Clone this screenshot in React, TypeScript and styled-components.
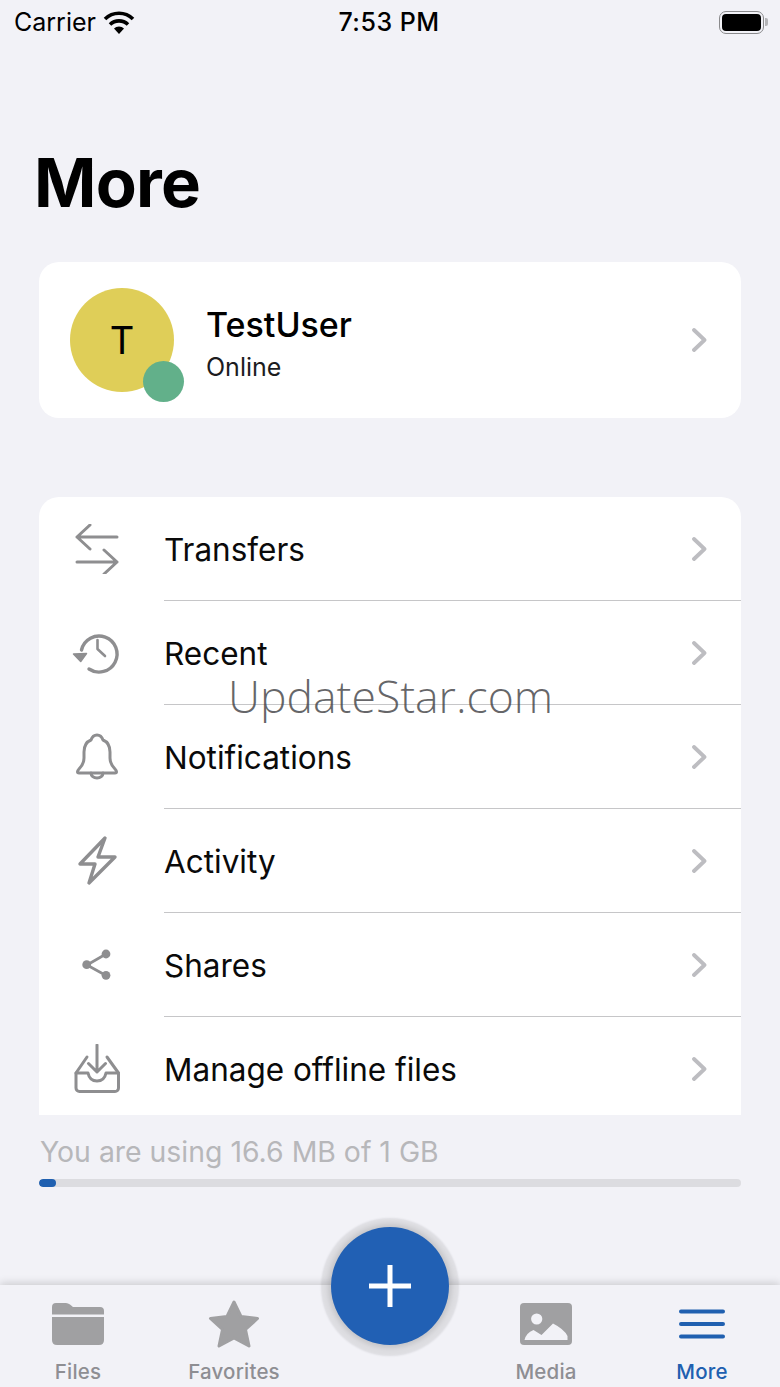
import React from "react";
import styled, { createGlobalStyle } from "styled-components";

const GlobalStyle = createGlobalStyle`
  html, body {
    margin: 0;
    padding: 0;
    background: #f2f2f7;
  }
  * {
    box-sizing: border-box;
  }
`;

const Page = styled.div`
  position: relative;
  width: 780px;
  height: 1387px;
  overflow: hidden;
  display: flex;
  flex-direction: column;
  background: #f2f2f7;
  color: #000;
  font-family: Inter, "Liberation Sans", sans-serif;
`;

const StatusBar = styled.div`
  display: grid;
  grid-template-columns: 1fr auto 1fr;
  align-items: center;
  height: 44px;
  padding: 0 16px 0 14px;
  font-size: 25px;
`;

const Carrier = styled.div`
  display: flex;
  align-items: center;
  gap: 7px;
`;

const Time = styled.div`
  font-weight: 500;
  letter-spacing: 0.5px;
`;

const Battery = styled.div`
  justify-self: end;
  position: relative;
  width: 45px;
  height: 23px;
  padding: 2px;
  border: 1.5px solid #8a8a8c;
  border-radius: 7px;

  &::before {
    content: "";
    display: block;
    height: 100%;
    background: #000;
    border-radius: 4px;
  }

  &::after {
    content: "";
    position: absolute;
    right: -5px;
    top: 6px;
    width: 3px;
    height: 8px;
    background: #b5b5b8;
    border-radius: 0 2px 2px 0;
  }
`;

const Title = styled.h1`
  margin: 92px 0 0 34px;
  font-size: 67px;
  line-height: 94px;
  font-weight: 700;
  letter-spacing: -0.7px;
`;

const ProfileCard = styled.div`
  display: flex;
  align-items: center;
  height: 156px;
  margin: 32px 39px 0;
  padding: 0 34px 0 31px;
  background: #fff;
  border-radius: 20px;
`;

const Avatar = styled.div`
  position: relative;
  flex: none;
  display: flex;
  align-items: center;
  justify-content: center;
  width: 104px;
  height: 104px;
  border-radius: 50%;
  background: #dfce58;
  font-size: 38px;
`;

const StatusDot = styled.span`
  position: absolute;
  right: -10px;
  bottom: -10px;
  width: 41px;
  height: 41px;
  border-radius: 50%;
  background: #62b08a;
`;

const ProfileText = styled.div`
  flex: 1;
  margin-left: 32px;
  padding-top: 6px;
`;

const ProfileName = styled.div`
  font-size: 34px;
  line-height: 42px;
  font-weight: 500;
`;

const ProfileState = styled.div`
  margin-top: 6px;
  font-size: 25px;
  line-height: 30px;
  color: #1c1c1e;
`;

const Menu = styled.div`
  height: 618px;
  margin: 79px 39px 0;
  overflow: hidden;
  background: #fff;
  border-radius: 20px 20px 0 0;
`;

const Row = styled.div`
  display: flex;
  height: 104px;
`;

const RowIcon = styled.div`
  flex: none;
  display: flex;
  align-items: center;
  justify-content: center;
  width: 50px;
  margin: 0 42px 0 33px;
`;

const RowBody = styled.div<{ $last?: boolean }>`
  flex: 1;
  display: flex;
  align-items: center;
  padding: 0 34px 0 0;
  font-size: 31.5px;
  color: #0a0a0a;
  border-bottom: ${(p) => (p.$last ? "none" : "1px solid #c6c6c8")};
`;

const RowLabel = styled.span`
  flex: 1;
  padding-top: 1px;
`;

const GreyIcon = styled.svg`
  display: block;
  fill: none;
  stroke: #8e8e90;
  stroke-width: 3;
  stroke-linecap: round;
  stroke-linejoin: round;
`;

const Usage = styled.div`
  margin: 19px 39px 0;
`;

const UsageText = styled.div`
  padding-left: 1px;
  font-size: 28.4px;
  line-height: 36px;
  color: #b7b7ba;
`;

const UsageTrack = styled.div`
  height: 8px;
  margin-top: 9px;
  background: #dcdce0;
  border-radius: 4px;
  overflow: hidden;
`;

const UsageFill = styled.div`
  height: 100%;
  background: #2060b0;
  border-radius: 4px;
`;

const TabBar = styled.nav`
  position: absolute;
  left: 0;
  right: 0;
  bottom: 0;
  display: grid;
  grid-template-columns: repeat(5, 156px);
  height: 102px;
  background: #f2f2f7;
  box-shadow: 0 -2px 8px rgba(0, 0, 0, 0.16);
`;

const Tab = styled.div<{ $active?: boolean }>`
  display: flex;
  flex-direction: column;
  align-items: center;
  height: 102px;
  padding-top: 14px;
  font-size: 20.5px;
  font-weight: 500;
  letter-spacing: 0.2px;
  color: ${(p) => (p.$active ? "#2060b0" : "#8e8e93")};
`;

const TabIcon = styled.div`
  display: flex;
  align-items: center;
  justify-content: center;
  height: 50px;
`;

const TabLabel = styled.span`
  margin-top: 10px;
  line-height: 26px;
`;

const Fab = styled.div`
  position: absolute;
  left: 331px;
  top: 1227px;
  display: flex;
  align-items: center;
  justify-content: center;
  width: 118px;
  height: 118px;
  border-radius: 50%;
  background: #2160b4;
  box-shadow: 0 0 4px 3px rgba(0, 0, 0, 0.1), 0 1px 2px 10px rgba(0, 0, 0, 0.085);
`;

const Watermark = styled.div`
  position: absolute;
  left: 228px;
  top: 669px;
  font-family: "Open Sans", "Liberation Sans", sans-serif;
  font-size: 44.5px;
  font-weight: 300;
  line-height: 54px;
  color: rgba(60, 60, 64, 0.78);
  white-space: nowrap;
`;

const Chevron = () => (
  <svg width="15" height="24" viewBox="0 0 15 24" fill="none">
    <path
      d="M2 2 L12.5 12 L2 22"
      stroke="#bdbdc1"
      strokeWidth="3.8"
      strokeLinecap="round"
      strokeLinejoin="round"
    />
  </svg>
);

const IconBox = ({ children }: { children: React.ReactNode }) => (
  <GreyIcon width="50" height="50" viewBox="0 0 50 50">
    {children}
  </GreyIcon>
);

const rows: { label: string; icon: React.ReactNode }[] = [
  {
    label: "Transfers",
    icon: (
      <IconBox>
        <path d="M5 13 H45 M5 13 L18 1 M5 13 L18 25" />
        <path d="M5 38 H45 M45 38 L32 26 M45 38 L32 50" />
      </IconBox>
    ),
  },
  {
    label: "Recent",
    icon: (
      <IconBox>
        <path d="M9.5 22 A18 18 0 1 1 17 41" strokeWidth="3.4" />
        <path d="M1.5 26 L14.5 25.5 L8.7 33.5 Z" fill="#8e8e90" strokeWidth="1.5" />
        <path d="M25.5 12 V21 L33 28" strokeWidth="2.6" />
      </IconBox>
    ),
  },
  {
    label: "Notifications",
    icon: (
      <IconBox>
        <path d="M25 3 C28 3 30 5 31 8 C36 10 38 15 38 20 V26 C38 31 40 34 43 37 C45 39 45 41 43 41 H7 C5 41 5 39 7 37 C10 34 12 31 12 26 V20 C12 15 14 10 19 8 C20 5 22 3 25 3 Z" />
        <path d="M19 41 A6 5 0 0 0 31 41" />
      </IconBox>
    ),
  },
  {
    label: "Activity",
    icon: (
      <IconBox>
        <path d="M33 2 L8 28 H23 L17 47 L43 21 H26 Z" strokeWidth="3.4" />
      </IconBox>
    ),
  },
  {
    label: "Shares",
    icon: (
      <IconBox>
        <path d="M34 14 L15 25 L34 35.5" strokeWidth="2.6" />
        <circle cx="34" cy="14" r="4.4" fill="#8e8e90" stroke="none" />
        <circle cx="14.7" cy="24.7" r="4.4" fill="#8e8e90" stroke="none" />
        <circle cx="34" cy="35.3" r="4.4" fill="#8e8e90" stroke="none" />
      </IconBox>
    ),
  },
  {
    label: "Manage offline files",
    icon: (
      <IconBox>
        <path d="M15 13 L4 29 V44 A3.5 3.5 0 0 0 7.5 47.5 H43 A3.5 3.5 0 0 0 46.5 44 V29 L35 13" />
        <path d="M4 29 H16 C17 34 20 37 25 37 S33 34 34 29 H46.5" />
        <path d="M25 1 V28 M16.5 19.5 L25 28 L33.5 19.5" />
      </IconBox>
    ),
  },
];

export default function App() {
  return (
    <Page>
      <GlobalStyle />
      <StatusBar>
        <Carrier>
          Carrier
          <svg width="32" height="24" viewBox="0 0 32 24" fill="none">
            <path d="M2 9 A20 20 0 0 1 30 9" stroke="#000" strokeWidth="3.6" />
            <path d="M7 14.5 A13 13 0 0 1 25 14.5" stroke="#000" strokeWidth="3.6" />
            <path d="M11 18.5 A7 7 0 0 1 21 18.5 L16 24 Z" fill="#000" />
          </svg>
        </Carrier>
        <Time>7:53 PM</Time>
        <Battery />
      </StatusBar>

      <Title>More</Title>

      <ProfileCard>
        <Avatar>
          T
          <StatusDot />
        </Avatar>
        <ProfileText>
          <ProfileName>TestUser</ProfileName>
          <ProfileState>Online</ProfileState>
        </ProfileText>
        <Chevron />
      </ProfileCard>

      <Menu>
        {rows.map((row, i) => (
          <Row key={row.label}>
            <RowIcon>{row.icon}</RowIcon>
            <RowBody $last={i === rows.length - 1}>
              <RowLabel>{row.label}</RowLabel>
              <Chevron />
            </RowBody>
          </Row>
        ))}
      </Menu>

      <Usage>
        <UsageText>You are using 16.6 MB of 1 GB</UsageText>
        <UsageTrack>
          <UsageFill style={{ width: `${(17 / 702) * 100}%` }} />
        </UsageTrack>
      </Usage>

      <TabBar>
        <Tab>
          <TabIcon>
            <svg width="52" height="42" viewBox="0 0 52 42" fill="#a0a0a2">
              <path d="M4 0 H14 Q16 0 18 1.5 L21 4 H48 Q52 4 52 8 V11.5 H0 V4 Q0 0 4 0 Z" />
              <path d="M0 14 H52 V37 Q52 42 47 42 H5 Q0 42 0 37 Z" />
            </svg>
          </TabIcon>
          <TabLabel>Files</TabLabel>
        </Tab>
        <Tab>
          <TabIcon>
            <svg width="52" height="50" viewBox="0 0 52 50">
              <path
                d="M26 3 L33 17.5 L49.5 19.5 L37.5 30.5 L41 47 L26 39 L11 47 L14.5 30.5 L2.5 19.5 L19 17.5 Z"
                fill="#a0a0a2"
                stroke="#a0a0a2"
                strokeWidth="3"
                strokeLinejoin="round"
              />
            </svg>
          </TabIcon>
          <TabLabel>Favorites</TabLabel>
        </Tab>
        <Tab />
        <Tab>
          <TabIcon>
            <svg width="52" height="42" viewBox="0 0 52 42">
              <rect width="52" height="42" rx="4" fill="#a0a0a2" />
              <circle cx="16.7" cy="16" r="5.6" fill="#f2f2f7" />
              <path
                d="M4.5 37 Q6 30 13.5 27 L21.5 32 L33 20.5 Q44 26 47.5 33 V37 Z"
                fill="#f2f2f7"
              />
            </svg>
          </TabIcon>
          <TabLabel>Media</TabLabel>
        </Tab>
        <Tab $active>
          <TabIcon>
            <svg width="46" height="30" viewBox="0 0 46 30" stroke="#2060b0" strokeWidth="4" strokeLinecap="round">
              <path d="M2 2.5 H44 M2 15 H44 M2 27.5 H44" />
            </svg>
          </TabIcon>
          <TabLabel>More</TabLabel>
        </Tab>
      </TabBar>

      <Fab>
        <svg width="44" height="44" viewBox="0 0 44 44" stroke="#fff" strokeWidth="5">
          <path d="M22 1 V43 M1 22 H43" />
        </svg>
      </Fab>

      <Watermark>UpdateStar.com</Watermark>
    </Page>
  );
}
